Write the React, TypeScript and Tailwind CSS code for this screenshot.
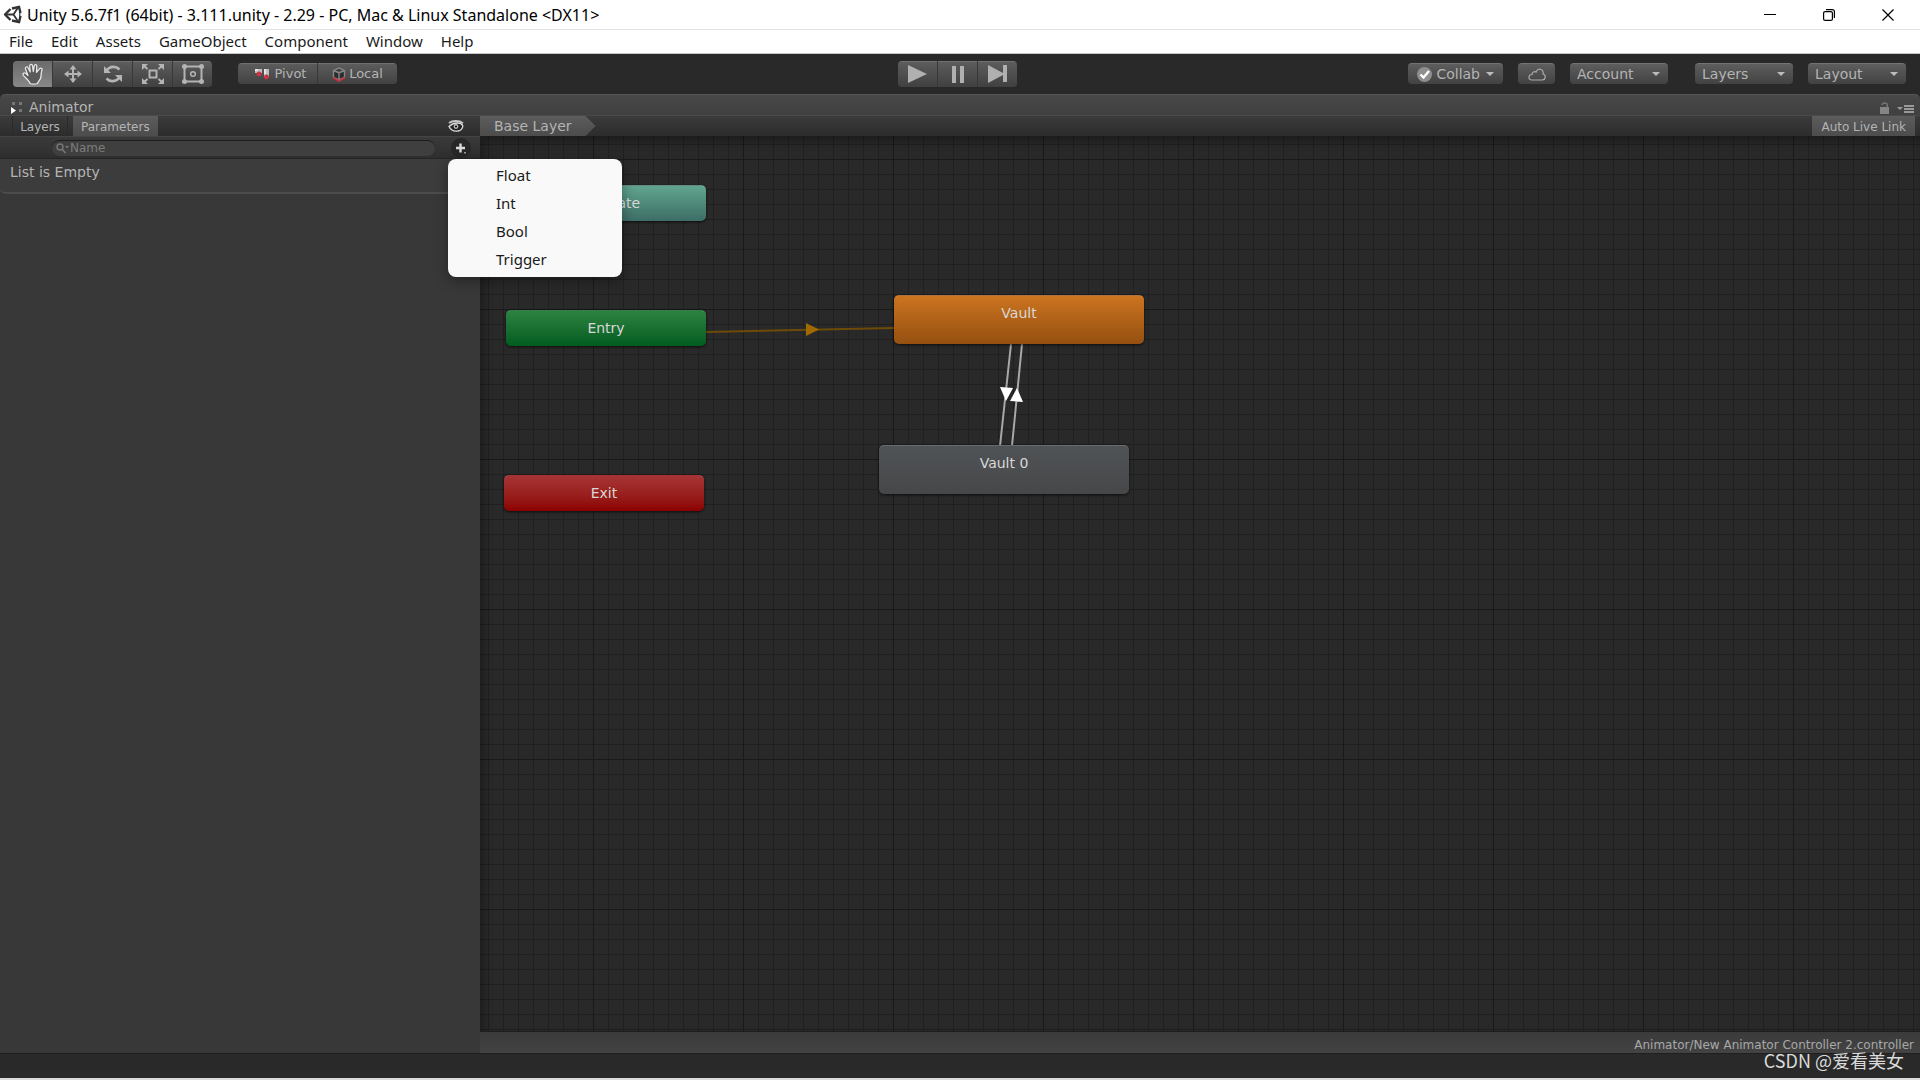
import { useState } from "react";
import { twMerge } from "tailwind-merge";

// --- PROPS ---
type DropdownProps = {
  label: string;
  options: string[];
};

type StateNodeProps = {
  title: string;
  className: string;
};

type ToolButtonProps = {
  label: string;
  active?: boolean;
  onClick?: () => void;
  children: React.ReactNode;
};

// --- DATA ---
const menus = [
  "File",
  "Edit",
  "Assets",
  "GameObject",
  "Component",
  "Window",
  "Help",
];

const parameterTypes = ["Float", "Int", "Bool", "Trigger"];

// --- ICONS ---
const UnityLogo = () => (
  <svg width="19" height="19" viewBox="0 0 19 19" fill="none" aria-hidden="true">
    <g stroke="#333" strokeLinejoin="round">
      <path d="M7.500 4 2 9.500 7.500 15M9 3.500 16 1.800 17.500 8M9 15.500 16 17.200 17.500 11" strokeWidth="2.400" />
      <path d="M10.500 9.500H3M10.500 9.500 15.500 1.800M10.500 9.500 15.500 17.200" strokeWidth="1.800" />
      <path d="M16.800 5v9" strokeWidth="1.200" />
    </g>
  </svg>
);

const HandIcon = () => (
  <svg width="22" height="22" viewBox="0 0 22 22" aria-hidden="true">
    <path
      d="M8 20.500C7.500 18 4 15.500 1.300 12.300.3 10.300 2 9.200 3.800 10.500L6 12.500 3.500 6C3 4 5.200 3 6 4.800L8.200 9 7.700 3C7.700.9 10.200.8 10.500 2.800L11.300 8.500 12.300 3C12.700 1 15 1.400 14.800 3.500L14.500 9.300 17.500 5.800C18.800 4.400 20.600 5.500 19.900 7.200 18.900 9.500 19.400 12 18.800 14.500 18.200 17 16 18.500 15.500 20.500 13 21.300 10 21.300 8 20.500Z"
      fill="#5a5a5a"
      stroke="#e6e6e6"
      strokeWidth="1.300"
      strokeLinejoin="round"
    />
  </svg>
);

const MoveIcon = () => (
  <svg width="18" height="18" viewBox="0 0 18 18" aria-hidden="true">
    <path d="M9 3v12M3 9h12" stroke="#b4b4b4" strokeWidth="2" />
    <path
      d="M9 0l3.500 4.500h-7ZM9 18l3.500-4.500h-7ZM0 9l4.500-3.500v7ZM18 9l-4.500-3.500v7Z"
      fill="#b4b4b4"
    />
  </svg>
);

const RotateIcon = () => (
  <svg width="20" height="18" viewBox="0 0 20 18" aria-hidden="true">
    <path
      d="M3.500 5.500C7 .8 13 .8 16.500 4.500M16.500 12.500C13 17.200 7 17.200 3.500 13.500"
      fill="none"
      stroke="#b4b4b4"
      strokeWidth="2.600"
    />
    <path d="M1 1v7h7ZM19 17v-7h-7Z" fill="#b4b4b4" />
  </svg>
);

const ScaleIcon = () => (
  <svg width="22" height="20" viewBox="0 0 22 20" aria-hidden="true">
    <rect
      x="7.500"
      y="6.500"
      width="7"
      height="7"
      fill="none"
      stroke="#b4b4b4"
      strokeWidth="2"
    />
    <path
      d="M1.500 1.500 5.500 5M20.500 1.500 16.500 5M1.500 18.500l4-3.500M20.500 18.500l-4-3.500"
      stroke="#b4b4b4"
      strokeWidth="2"
    />
    <path
      d="M0 0h6L0 6ZM22 0h-6l6 6ZM0 20h6l-6-6ZM22 20h-6l6-6Z"
      fill="#b4b4b4"
    />
  </svg>
);

const RectIcon = () => (
  <svg width="22" height="20" viewBox="0 0 22 20" aria-hidden="true">
    <rect
      x="2.500"
      y="2.500"
      width="17"
      height="15"
      fill="none"
      stroke="#b4b4b4"
      strokeWidth="2"
    />
    <g fill="#b4b4b4">
      <circle cx="2.500" cy="2.500" r="2.500" />
      <circle cx="19.500" cy="2.500" r="2.500" />
      <circle cx="2.500" cy="17.500" r="2.500" />
      <circle cx="19.500" cy="17.500" r="2.500" />
    </g>
    <circle
      cx="11"
      cy="10"
      r="2.300"
      fill="none"
      stroke="#b4b4b4"
      strokeWidth="1.500"
    />
  </svg>
);

const PivotIcon = () => (
  <svg width="16" height="12" viewBox="0 0 16 12" aria-hidden="true">
    <path d="M0 1h7v4H0ZM9 1h5v8H9Z" fill="#bdbdbd" />
    <path d="M0 1h3v2H0ZM9 1h2v5H9Z" fill="#e6e6e6" />
    <circle cx="4" cy="6" r="2.400" fill="#cf3341" />
    <circle cx="11.500" cy="9" r="2.400" fill="#cf3341" />
  </svg>
);

const CubeIcon = () => (
  <svg width="14" height="15" viewBox="0 0 14 15" aria-hidden="true">
    <path
      d="M7 1 12.500 3.500v7L7 13 1.500 10.500v-7ZM1.500 3.500 7 6l5.500-2.500M7 6v7"
      fill="#2c2c2c"
      stroke="#858585"
      strokeWidth="1.400"
    />
    <path
      d="M1 10.500 7 14l6-3.500"
      fill="none"
      stroke="#c6323f"
      strokeWidth="1.600"
    />
  </svg>
);

const CloudIcon = () => (
  <svg width="18" height="13" viewBox="0 0 18 13" aria-hidden="true">
    <path
      d="M4 12C1.500 12 .8 10.500 1 9c.2-1.500 1.500-2.500 3-2.500C4 4 6.500 3 8 4c.8-2.500 3-3.500 5-2.500 2 .8 2.500 2.500 2 4.500 1.500.4 2.300 1.500 2.200 3-.1 2-1.200 3-3.200 3Z"
      fill="none"
      stroke="#aaa"
      strokeWidth="1.200"
    />
  </svg>
);

const CollabIcon = () => (
  <svg width="15" height="15" viewBox="0 0 15 15" aria-hidden="true">
    <circle cx="7.500" cy="7.500" r="7.500" fill="#8f8f8f" />
    <path
      d="M3.500 7.500 6.500 10.500 12 4"
      fill="none"
      stroke="#fff"
      strokeWidth="2.400"
    />
  </svg>
);

const EyeIcon = () => (
  <svg width="16" height="12" viewBox="0 0 16 12" aria-hidden="true">
    <path
      d="M1 6.500C3 10.500 7 11.500 10 11c2.500-.4 4.500-2.500 4.800-5C14 3.500 12 2.800 9 3 5.500 3.200 3 4.500 1 6.500Z"
      fill="#222"
      stroke="#d6d6d6"
      strokeWidth="1.400"
    />
    <path
      d="M1 3C4 .7 11 .2 15 3.200"
      fill="none"
      stroke="#c4c4c4"
      strokeWidth="2"
    />
    <circle cx="8" cy="6.500" r="2.400" fill="#bbb" />
    <circle cx="8" cy="6.500" r="1.100" fill="#111" />
  </svg>
);

const Caret = ({ className }: { className?: string }) => (
  <svg
    width="8"
    height="4"
    viewBox="0 0 8 4"
    aria-hidden="true"
    className={twMerge("text-[#bcbcbc]", className)}
  >
    <path d="M0 0h8L4 4Z" fill="currentColor" />
  </svg>
);

// --- CONTROLS ---
const ToolButton = (props: ToolButtonProps) => (
  <button
    type="button"
    aria-label={props.label}
    onClick={props.onClick}
    className={twMerge(
      "flex h-[26px] w-[39px] items-center justify-center border-t border-t-[#707070] bg-linear-to-b from-[#5c5c5c] to-[#404040]",
      props.active && "from-[#6c6c6c] to-[#888888]"
    )}
  >
    {props.children}
  </button>
);

const Dropdown = (props: DropdownProps) => (
  <div className="relative flex h-[21px] w-[98px] items-center rounded border-t border-[#747474] bg-linear-to-b from-[#5e5e5e] to-[#424242]">
    <select
      aria-label={props.label}
      defaultValue={props.options[0]}
      className="h-full w-full appearance-none bg-transparent pl-[7px] text-sm leading-5 outline-none"
    >
      {props.options.map((option) => (
        <option key={option}>{option}</option>
      ))}
    </select>
    <Caret className="pointer-events-none absolute right-2" />
  </div>
);

const StateNode = (props: StateNodeProps) => (
  <div
    className={twMerge(
      "absolute flex h-9 w-[200px] items-center justify-center rounded-[5px] border-t border-white/20 bg-linear-to-b pb-px text-sm text-[#d8d8d8] shadow-[0_1px_3px_rgba(0,0,0,0.7)]",
      props.className
    )}
  >
    {props.title}
  </div>
);

// --- SECTIONS ---
const TitleBar = () => (
  <header className="flex h-[30px] shrink-0 items-center border-b border-[#e3e3e3] bg-white pl-[3px] font-['Noto_Sans','Open_Sans',sans-serif] text-base text-black">
    <UnityLogo />
    <h1 className="ml-[5px] flex-1">
      Unity 5.6.7f1 (64bit) - 3.111.unity - 2.29 - PC, Mac &amp; Linux
      Standalone &lt;DX11&gt;
    </h1>
    <div className="flex gap-[35px] pr-5">
      <button type="button" aria-label="Minimize" className="p-[6px]">
        <svg width="12" height="12" viewBox="0 0 12 12">
          <path d="M0 5.500h12" stroke="#000" />
        </svg>
      </button>
      <button type="button" aria-label="Restore" className="p-[6px]">
        <svg width="12" height="12" viewBox="0 0 12 12" fill="none">
          <rect x=".6" y="2.600" width="8.800" height="8.800" rx="1.500" stroke="#000" strokeWidth="1.200" />
          <path d="M3 .6h6.400a2 2 0 0 1 2 2V9" stroke="#000" strokeWidth="1.200" />
        </svg>
      </button>
      <button type="button" aria-label="Close" className="p-[6px]">
        <svg width="12" height="12" viewBox="0 0 12 12">
          <path d="M.5.5l11 11M11.500.5l-11 11" stroke="#000" strokeWidth="1.200" />
        </svg>
      </button>
    </div>
  </header>
);

const MenuBar = () => (
  <nav className="flex h-6 shrink-0 items-center gap-[18px] border-b border-[#c8c8c8] bg-white pb-[2px] pl-[9px] font-['Noto_Sans','Open_Sans',sans-serif] text-[15px] text-[#1a1a1a]">
    {menus.map((menu) => (
      <button key={menu} type="button" className="leading-5">
        {menu}
      </button>
    ))}
  </nav>
);

const Toolbar = () => {
  const [tool, setTool] = useState("Hand");

  const tools = [
    { name: "Hand", icon: <HandIcon /> },
    { name: "Move", icon: <MoveIcon /> },
    { name: "Rotate", icon: <RotateIcon /> },
    { name: "Scale", icon: <ScaleIcon /> },
    { name: "Rect", icon: <RectIcon /> },
  ];

  return (
    <div className="grid h-10 shrink-0 grid-cols-[1fr_auto_1fr] items-center bg-[#292929] pr-[14px] pb-px pl-[13px] text-[13px] text-[#b4b4b4]">
      <div className="flex items-center">
        <div className="flex gap-px overflow-hidden rounded bg-[#383838]">
          {tools.map(({ name, icon }) => (
            <ToolButton
              key={name}
              label={name}
              active={tool === name}
              onClick={() => setTool(name)}
            >
              {icon}
            </ToolButton>
          ))}
        </div>
        <div className="ml-[26px] flex gap-px overflow-hidden rounded bg-[#383838]">
          <button
            type="button"
            className="flex h-[21px] w-[79px] items-center justify-center gap-1 border-t border-[#707070] bg-linear-to-b from-[#5c5c5c] to-[#424242] pl-[6px]"
          >
            <PivotIcon />
            Pivot
          </button>
          <button
            type="button"
            className="flex h-[21px] w-[79px] items-center justify-center gap-[3px] border-t border-[#707070] bg-linear-to-b from-[#5c5c5c] to-[#424242]"
          >
            <CubeIcon />
            Local
          </button>
        </div>
      </div>

      <div className="mr-1 flex gap-px overflow-hidden rounded bg-[#383838]">
        <ToolButton label="Play">
          <svg width="19" height="18" viewBox="0 0 19 18">
            <path d="M0 0v18l19-9Z" fill="#b0b0b0" />
          </svg>
        </ToolButton>
        <ToolButton label="Pause">
          <svg width="12" height="17" viewBox="0 0 12 17">
            <path d="M0 0h4v17H0ZM8 0h4v17H8Z" fill="#b0b0b0" />
          </svg>
        </ToolButton>
        <ToolButton label="Step">
          <svg width="20" height="18" viewBox="0 0 20 18">
            <path d="M0 0v18l15-8v7h4V0h-4v8Z" fill="#b0b0b0" />
          </svg>
        </ToolButton>
      </div>

      <div className="flex items-center justify-end gap-[15px]">
        <button
          type="button"
          className="flex h-[21px] items-center gap-1 rounded border-t border-[#747474] bg-linear-to-b from-[#5e5e5e] to-[#424242] px-[9px] text-sm"
        >
          <CollabIcon />
          Collab
          <Caret className="ml-[2px]" />
        </button>
        <button
          type="button"
          aria-label="Services"
          className="flex h-[21px] w-[37px] items-center justify-center rounded border-t border-[#747474] bg-linear-to-b from-[#5e5e5e] to-[#424242]"
        >
          <CloudIcon />
        </button>
        <Dropdown label="Account" options={["Account", "Sign out"]} />
        <div className="ml-3 flex gap-[15px]">
          <Dropdown label="Visible layers" options={["Layers", "Everything"]} />
          <Dropdown label="Editor layout" options={["Layout", "Default"]} />
        </div>
      </div>
    </div>
  );
};

const WindowTabs = () => (
  <div className="flex h-[21px] shrink-0 items-center rounded-t-[5px] border-t border-[#545454] bg-linear-to-b from-[#484848] to-[#404040] pr-[6px] pl-[11px] text-sm text-[#b4b4b4]">
    <svg width="12" height="13" viewBox="0 0 12 13" aria-hidden="true" className="mt-1">
      <path d="M1 1h3v3H1ZM8 1h3v3H8ZM8 8h3v3H8Z" fill="#777" />
      <path d="M0 6v7l5-3.500Z" fill="#fff" />
    </svg>
    <h2 className="ml-[6px] flex-1 pt-[3px] leading-4">Animator</h2>
    <button type="button" aria-label="Lock" className="pt-[5px]">
      <svg width="9" height="12" viewBox="0 0 9 12">
        <path d="M0 5h9v7H0Z" fill="#858585" />
        <path d="M2 3C2.500.3 7 .3 7.300 3v2.500" fill="none" stroke="#777" strokeWidth="1.400" />
      </svg>
    </button>
    <button type="button" aria-label="Window options" className="ml-2 pt-2">
      <svg width="17" height="8" viewBox="0 0 17 8">
        <path d="M0 2h6L3 5ZM7 0h10v2H7ZM7 3h10v2H7ZM7 6h10v2H7Z" fill="#9a9a9a" />
      </svg>
    </button>
  </div>
);

const ParameterPanel = () => {
  const [open, setOpen] = useState(true);

  return (
    <aside className="flex w-1/4 shrink-0 flex-col bg-[#383838] text-[#b4b4b4]">
      <div className="flex h-[21px] items-center border-t border-[#4a4a4a] bg-linear-to-b from-[#3b3b3b] to-[#2c2c2c] pr-4 pl-3 text-xs">
        <button type="button" className="h-full w-14 border-x border-[#2a2a2a] pt-[2px]">
          Layers
        </button>
        <button
          type="button"
          className="ml-[5px] h-full bg-linear-to-b from-[#5c5c5c] to-[#4c4c4c] px-2 pt-[2px]"
        >
          Parameters
        </button>
        <button type="button" aria-label="Toggle panel" className="ml-auto">
          <EyeIcon />
        </button>
      </div>

      <div className="relative flex h-[22px] items-center border-t border-[#454545] bg-linear-to-b from-[#3a3a3a] to-[#2e2e2e] pr-[9px] pl-[52px]">
        <label className="flex h-4 flex-1 items-center rounded-full border-t border-[#1e1e1e] bg-[#3f3f3f] pl-1">
          <svg width="14" height="11" viewBox="0 0 14 11" aria-hidden="true">
            <circle cx="4" cy="4" r="3" fill="none" stroke="#777" strokeWidth="1.400" />
            <path d="M6 6l3.500 4" stroke="#777" strokeWidth="1.600" />
            <path d="M9 3h4l-2 2.500Z" fill="#777" />
          </svg>
          <input
            type="text"
            aria-label="Search parameters"
            placeholder="Name"
            className="min-w-0 flex-1 bg-transparent text-xs outline-none placeholder:text-[#7c7c7c]"
          />
        </label>
        <button
          type="button"
          aria-label="Add parameter"
          aria-expanded={open}
          onClick={() => setOpen(!open)}
          className="ml-4 flex size-5 items-center justify-center rounded-full bg-[#272727]"
        >
          <svg width="12" height="12" viewBox="0 0 12 12">
            <path d="M1 6h9M5.500 1.500v9" stroke="#dadada" strokeWidth="2.400" />
            <path d="M9 10h2v1.500H9Z" fill="#999" />
          </svg>
        </button>
        {open && (
          <ul className="absolute top-[22px] left-[448px] z-10 w-[174px] rounded-lg bg-[#f9f9f9] pt-[2px] pb-1 font-['Noto_Sans','Open_Sans',sans-serif] text-[15px] text-[#1a1a1a] shadow-[0_4px_14px_rgba(0,0,0,0.35)]">
            {parameterTypes.map((type) => (
              <li key={type}>
                <button
                  type="button"
                  onClick={() => setOpen(false)}
                  className="block h-7 w-full pl-12 text-left"
                >
                  {type}
                </button>
              </li>
            ))}
          </ul>
        )}
      </div>

      <p className="h-9 rounded-b-md border-t border-b-2 border-t-[#252525] border-b-[#4c4c4c] bg-[#3c3c3c] pt-[5px] pl-[10px] text-sm leading-4">
        List is Empty
      </p>
    </aside>
  );
};

const Transitions = () => (
  <svg
    width="700"
    height="380"
    viewBox="0 0 700 380"
    className="absolute top-0 left-0"
    aria-hidden="true"
  >
    <path d="M226 196 414 192" stroke="#6e4a08" strokeWidth="2" />
    <path d="M326 187v13l13-6.500Z" fill="#a06a00" />
    <path
      d="M531 208 520 310M542 208 532 310"
      stroke="#a8a8a8"
      strokeWidth="2"
    />
    <path d="M520 251l13 1-7 13ZM537 252l6 14-13-1Z" fill="#fff" />
  </svg>
);

const AnimatorGraph = () => (
  <main className="flex min-w-0 flex-1 flex-col">
    <div className="flex h-[21px] shrink-0 border-t border-[#4a4a4a] bg-linear-to-b from-[#3b3b3b] to-[#2c2c2c] pr-[5px] text-[#b4b4b4]">
      <button
        type="button"
        className="bg-linear-to-b from-[#5c5c5c] to-[#4c4c4c] pr-6 pl-[14px] text-sm leading-5 [clip-path:polygon(0_0,calc(100%_-_10px)_0,100%_50%,calc(100%_-_10px)_100%,0_100%)]"
      >
        Base Layer
      </button>
      <button
        type="button"
        className="ml-auto bg-linear-to-b from-[#5c5c5c] to-[#4c4c4c] px-[9px] pt-[2px] text-xs"
      >
        Auto Live Link
      </button>
    </div>

    {/* 15px cells, with a darker line every tenth */}
    <div className="relative min-h-0 flex-1 overflow-hidden bg-[#292929] bg-[linear-gradient(to_right,#191919_1px,transparent_1px),linear-gradient(to_bottom,#191919_1px,transparent_1px),linear-gradient(to_right,#202020_1px,transparent_1px),linear-gradient(to_bottom,#202020_1px,transparent_1px)] bg-size-[150px_150px,150px_150px,15px_15px,15px_15px] bg-position-[113px_23px,113px_23px,8px_8px,8px_8px] shadow-[inset_4px_6px_10px_rgba(0,0,0,0.3)]">
      <Transitions />
      <StateNode
        title="Any State"
        className="top-[49px] left-[26px] from-[#62a58f] to-[#3c6e66]"
      />
      <StateNode
        title="Entry"
        className="top-[174px] left-[26px] from-[#2c8340] to-[#005c20]"
      />
      <StateNode
        title="Exit"
        className="top-[339px] left-[24px] from-[#a63434] to-[#8c0000]"
      />
      <StateNode
        title="Vault"
        className="top-[159px] left-[414px] h-[49px] w-[250px] items-start from-[#cc7420] to-[#955010] pt-[7px]"
      />
      <StateNode
        title="Vault 0"
        className="top-[309px] left-[399px] h-[49px] w-[250px] items-start from-[#505356] to-[#464749] pt-[7px]"
      />
    </div>

    <footer className="h-[22px] shrink-0 border-t border-[#1e1e1e] bg-linear-to-b from-[#3a3a3a] to-[#444444] pt-[5px] pr-[6px] text-right text-xs text-[#a8a8a8]">
      Animator/New Animator Controller 2.controller
    </footer>
  </main>
);

const App = () => (
  <div className="relative flex h-screen flex-col overflow-hidden bg-[#292929] font-['DejaVu_Sans','Noto_Sans',sans-serif]">
    <TitleBar />
    <MenuBar />
    <Toolbar />
    <WindowTabs />
    <div className="flex min-h-0 flex-1">
      <ParameterPanel />
      <AnimatorGraph />
    </div>
    <div className="h-[27px] shrink-0 border-t border-b-2 border-t-[#1f1f1f] border-b-[#dcdcdc] bg-[#292929]" />
    <p className="absolute right-4 bottom-2 font-['Noto_Sans_CJK_SC',sans-serif] text-lg leading-6 text-[#dadada]">
      CSDN @爱看美女
    </p>
  </div>
);

export default App;
